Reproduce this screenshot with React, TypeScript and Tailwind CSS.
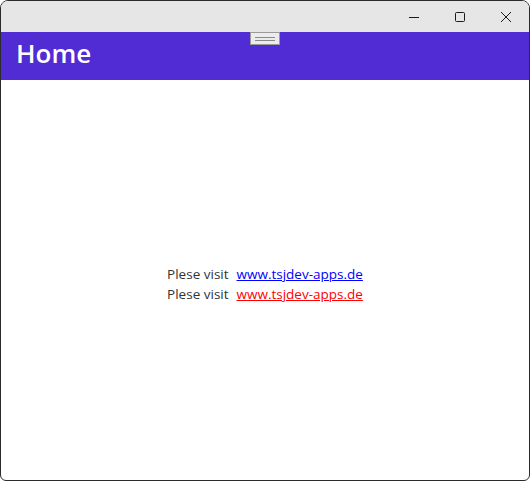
export default function App() {
  return (
    <div className="w-[530px] h-[481px] bg-white">
      <div className="w-full h-full flex flex-col border border-[#2b2b2b] rounded-t-lg rounded-b-md overflow-hidden">
        {/* Title bar */}
        <div className="h-[31px] bg-[#e6e6e6] flex justify-end items-stretch shrink-0">
          <div className="w-[46px] flex items-center justify-center">
            <svg width="12" height="12" viewBox="0 0 12 12"><path d="M1 6.5h10" stroke="#1a1a1a" strokeWidth="1" /></svg>
          </div>
          <div className="w-[46px] flex items-center justify-center">
            <svg width="12" height="12" viewBox="0 0 12 12"><rect x="1.5" y="1.5" width="9" height="9" rx="1" fill="none" stroke="#1a1a1a" strokeWidth="1" /></svg>
          </div>
          <div className="w-[46px] flex items-center justify-center">
            <svg width="12" height="12" viewBox="0 0 12 12"><path d="M1 1l10 10M11 1L1 11" stroke="#1a1a1a" strokeWidth="1" /></svg>
          </div>
        </div>

        {/* Header */}
        <div className="relative h-[48px] bg-[#512bd4] flex items-center px-[15px] pb-[6px] shrink-0">
          <span className="text-white text-[26px] font-semibold font-['Open_Sans',sans-serif] leading-none">Home</span>
          <div className="absolute left-[249px] top-0 w-[30px] h-[13px] bg-[#ececec] border border-[#9a9a9a] flex flex-col justify-center gap-[2px] px-[4px]">
            <div className="h-px bg-[#8a8a8a]" />
            <div className="h-px bg-[#8a8a8a]" />
          </div>
        </div>

        {/* Content */}
        <div className="flex-1 flex flex-col items-center justify-center pt-[8px] font-['Open_Sans',sans-serif] text-[13.5px] leading-[20px] text-[#333]">
          <div className="flex gap-[8px]">
            <span>Plese visit</span>
            <a className="text-[#0000ff] underline">www.tsjdev-apps.de</a>
          </div>
          <div className="flex gap-[8px]">
            <span>Plese visit</span>
            <a className="text-[#ff0000] underline">www.tsjdev-apps.de</a>
          </div>
        </div>
      </div>
    </div>
  )
}
